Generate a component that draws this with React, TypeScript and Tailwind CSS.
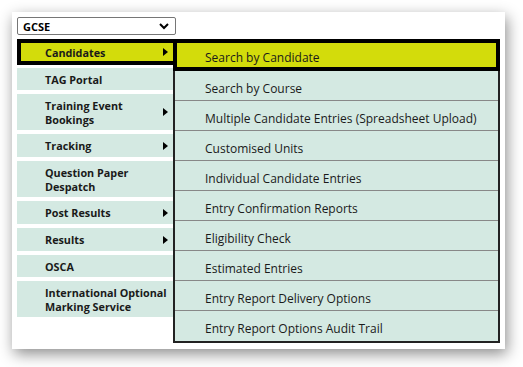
import React from "react";

const leftItems: { label: React.ReactNode; h: string; arrow?: boolean }[] = [
  { label: "TAG Portal", h: "h-[22px]" },
  { label: <>Training Event<br />Bookings</>, h: "h-[36px]", arrow: true },
  { label: "Tracking", h: "h-[23px]", arrow: true },
  { label: <>Question Paper<br />Despatch</>, h: "h-[36px]" },
  { label: "Post Results", h: "h-[23px]", arrow: true },
  { label: "Results", h: "h-[23px]", arrow: true },
  { label: "OSCA", h: "h-[22px]" },
  { label: <>International Optional<br />Marking Service</>, h: "h-[36px]" },
];

const subItems = [
  "Search by Course",
  "Multiple Candidate Entries (Spreadsheet Upload)",
  "Customised Units",
  "Individual Candidate Entries",
  "Entry Confirmation Reports",
  "Eligibility Check",
  "Estimated Entries",
  "Entry Report Delivery Options",
  "Entry Report Options Audit Trail",
];

function Arrow() {
  return (
    <svg width="5" height="8" viewBox="0 0 5 8" className="absolute right-[5px] top-1/2 -translate-y-1/2">
      <path d="M0 0 L5 4 L0 8 Z" fill="#000" />
    </svg>
  );
}

export default function App() {
  return (
    <div className="w-[523px] h-[367px] bg-white overflow-hidden" style={{ fontFamily: "'Open Sans', sans-serif" }}>
      <div className="ml-[12px] mt-[12px] w-[493px] h-[337px] bg-white shadow-[2px_5px_14px_rgba(0,0,0,0.45)] pt-[5px] pl-[5px]">
        <div className="relative w-[159px] h-[18px] border border-[#767676] rounded-[2px] bg-white flex items-center pl-[5px]">
          <span className="text-[11px] font-bold text-black leading-none">GCSE</span>
          <svg width="10" height="7" viewBox="0 0 10 7" className="absolute right-[6px] top-[5px]">
            <path d="M1 1 L5 5 L9 1" stroke="#000" strokeWidth="2" fill="none" />
          </svg>
        </div>
        <div className="flex mt-[4px]">
          <div className="w-[156px] flex flex-col">
            <div className="relative h-[26px] bg-[#d3dc0b] border-[4px] border-r-0 border-black flex items-center pl-[24px] pt-[2px]">
              <span className="text-[10.8px] font-bold text-[#1a1a1a] leading-[14px]">Candidates</span>
              <Arrow />
            </div>
            <div className="flex flex-col gap-[4px] mt-[3px]">
              {leftItems.map((it, i) => (
                <div key={i} className={`relative ${it.h} bg-[#d4e9e2] flex items-center pl-[28px] pt-[1px]`}>
                  <span className="text-[10.8px] font-bold text-[#1a1a1a] leading-[14px]">{it.label}</span>
                  {it.arrow && <Arrow />}
                </div>
              ))}
            </div>
          </div>
          <div className="w-[327px] flex flex-col">
            <div className="h-[32px] bg-[#d3dc0b] border-[4px] border-black flex items-center pl-[28px] pt-[6px]">
              <span className="text-[12px] text-[#1a1a1a] leading-none">Search by Candidate</span>
            </div>
            <div className="border-x-2 border-b-2 border-[#222]">
              {subItems.map((s, i) => (
                <div
                  key={i}
                  className={`h-[30px] bg-[#d4e9e2] flex items-center pl-[30px] pt-[6px] ${i < subItems.length - 1 ? "border-b border-[#888]" : ""}`}
                >
                  <span className="text-[12px] text-[#1a1a1a] leading-none">{s}</span>
                </div>
              ))}
            </div>
          </div>
        </div>
      </div>
    </div>
  );
}
